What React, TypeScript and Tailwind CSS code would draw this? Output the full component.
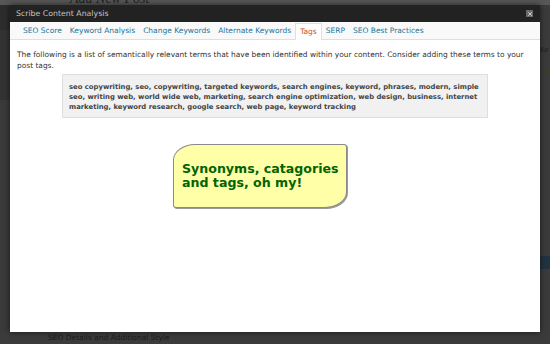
import { X } from 'lucide-react';

const tabs = [
  'SEO Score',
  'Keyword Analysis',
  'Change Keywords',
  'Alternate Keywords',
  'Tags',
  'SERP',
  'SEO Best Practices',
];

const tags =
  'seo copywriting, seo, copywriting, targeted keywords, search engines, keyword, phrases, modern, simple seo, writing web, world wide web, marketing, search engine optimization, web design, business, internet marketing, keyword research, google search, web page, keyword tracking';

export default function App() {
  return (
    <div className="relative w-[550px] h-[344px] overflow-hidden bg-[#3b3b3b] font-['DejaVu_Sans',sans-serif]">
      {/* Page behind the overlay */}
      <div className="flex flex-col h-full">
        <div className="h-[5px] bg-[#575757] pl-[70px] overflow-hidden">
          <span className="block -mt-[9px] text-[14px] leading-[16px] text-[#222] font-['Liberation_Serif',serif] italic">
            Add New Post
          </span>
        </div>
        <div className="flex flex-1">
          <div className="w-[10px] flex flex-col">
            <div className="h-[25px] bg-[#2c2c2c]" />
            <div className="h-[70px] bg-[#333]" />
            <div className="flex-1 bg-[#3a3a3a]" />
          </div>
          <div className="flex-1" />
          <div className="w-[10px] flex flex-col pt-[40px] gap-[10px] text-[7px] text-[#1f1f1f]">
            <span>Ke</span>
            <span className="text-[#2d4a1f]">wr</span>
            <div className="mt-[170px] h-[13px] bg-[#213340]" />
          </div>
        </div>
        <div className="h-[12px] pl-[48px] text-[7.5px] leading-[12px] text-[#1c1c1c]">
          SEO Details and Additional Style
        </div>
      </div>

      {/* Modal */}
      <div className="absolute left-[10px] top-[5px] w-[530px] h-[327px] bg-white flex flex-col shadow-[0_0_6px_rgba(0,0,0,0.6)]">
        <div className="h-[17px] bg-[#222] flex items-center justify-between pl-[6px] pr-[7px]">
          <span className="text-[7.8px] text-[#c4c4c4]">Scribe Content Analysis</span>
          <div className="w-[7px] h-[7px] bg-[#6b6b6b] flex items-center justify-center">
            <X className="w-[6px] h-[6px] text-[#cfcfcf]" strokeWidth={4} />
          </div>
        </div>

        <div className="h-[18px] bg-[#f9f9f9] border-b border-[#dfdfdf] flex items-end pl-[9px]">
          {tabs.map((t) =>
            t === 'Tags' ? (
              <div
                key={t}
                className="h-[17px] px-[4px] bg-white border border-b-0 border-[#dfdfdf] -mb-px flex items-center text-[7.5px] text-[#d54e21]"
              >
                {t}
              </div>
            ) : (
              <div key={t} className="h-[17px] px-[4px] flex items-center text-[7.5px] text-[#21759b]">
                {t}
              </div>
            )
          )}
        </div>

        <div className="flex flex-col pl-[7px] pr-[4px] pt-[9px]">
          <p className="text-[7.45px] leading-[11px] text-[#333]">
            The following is a list of semantically relevant terms that have been identified within your content. Consider adding
            these terms to your post tags.
          </p>
          <div className="mt-[3px] ml-[45px] w-[426px] bg-[#f1f1f1] border border-[#dedede] px-[6px] pt-[7px] pb-[5px]">
            <p className="text-[6.85px] leading-[10px] font-bold text-[#444]">{tags}</p>
          </div>
          <div className="mt-[26px] ml-[156px] w-[174px] h-[64px] bg-[#ffffa8] border border-[#8a8a8a] rounded-tl-[22px_16px] rounded-br-[22px_16px] rounded-tr-[3px] rounded-bl-[3px] shadow-[1px_1px_0_#9a9a9a] pl-[8px] pt-[17px]">
            <p className="text-[12.6px] leading-[13.5px] font-bold text-[#006400]">
              Synonyms, catagories
              <br />
              and tags, oh my!
            </p>
          </div>
        </div>
      </div>
    </div>
  );
}
